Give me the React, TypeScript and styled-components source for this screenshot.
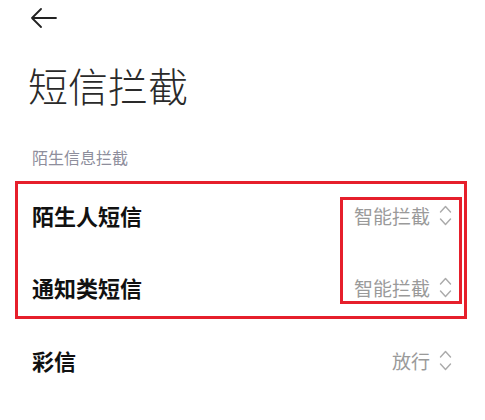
import styled, { createGlobalStyle } from "styled-components";

const GlobalStyle = createGlobalStyle`
  body {
    margin: 0;
    background: #ffffff;
    font-family: "Noto Sans CJK SC", "Noto Sans", sans-serif;
  }
`;

interface Item {
  label: string;
  value: string;
}

const strangerItems: Item[] = [
  { label: "陌生人短信", value: "智能拦截" },
  { label: "通知类短信", value: "智能拦截" },
];

const BackIcon = () => (
  <svg width="28" height="20" viewBox="0 0 28 20" fill="none">
    <path
      d="M2 10 H26 M11 1 L2 10 L11 19"
      stroke="#222"
      strokeWidth="1.8"
      strokeLinecap="round"
      strokeLinejoin="round"
    />
  </svg>
);

const UpDownIcon = () => (
  <svg width="13" height="21" viewBox="0 0 13 21" fill="none">
    <path
      d="M1.5 7 L6.5 1.5 L11.5 7 M1.5 14 L6.5 19.5 L11.5 14"
      stroke="#aaaaaa"
      strokeWidth="1.4"
      strokeLinecap="round"
      strokeLinejoin="round"
    />
  </svg>
);

function SettingRow({ label, value, height }) {
  return (
    <Row height={height}>
      <Label>{label}</Label>
      <Value>
        {value}
        <UpDownIcon />
      </Value>
    </Row>
  );
}

export default function App() {
  return (
    <Page>
      <GlobalStyle />
      <Header>
        <BackIcon />
      </Header>
      <Title>短信拦截</Title>
      <SectionTitle>陌生信息拦截</SectionTitle>

      <Highlight>
        <ValueMark />
        {strangerItems.map((item) => (
          <SettingRow
            key={item.label}
            label={item.label}
            value={item.value}
            height={54}
          />
        ))}
      </Highlight>

      <PlainRows>
        <SettingRow label="彩信" value="放行" height={72} />
      </PlainRows>
    </Page>
  );
}

const Page = styled.div`
  width: 485px;
  height: 420px;
  overflow: hidden;
  display: flex;
  flex-direction: column;
`;

const Header = styled.div`
  height: 36px;
  padding-left: 30px;
  display: flex;
  align-items: center;
`;

const Title = styled.h1`
  margin: 25px 0 0;
  padding-left: 28px;
  font-size: 40px;
  line-height: 48px;
  font-weight: 300;
  color: #2a2a2a;
`;

const SectionTitle = styled.div`
  margin-top: 38px;
  padding-left: 32px;
  font-size: 16px;
  line-height: 20px;
  color: #8e8e9c;
`;

const Highlight = styled.div`
  position: relative;
  margin: 14px 18px 0 15px;
  border: 3px solid #e61f2b;
  padding: 4px 12px 2px 14px;
  display: flex;
  flex-direction: column;
  gap: 18px;
`;

const ValueMark = styled.div`
  position: absolute;
  top: 13px;
  bottom: 12px;
  right: 2px;
  width: 116px;
  border: 3px solid #e61f2b;
  pointer-events: none;
`;

const PlainRows = styled.div`
  margin-top: 5px;
  padding: 0 33px 0 32px;
  display: flex;
  flex-direction: column;
`;

const Row = styled.div<{ height: number }>`
  height: ${(props) => props.height}px;
  display: flex;
  align-items: center;
  justify-content: space-between;
`;

const Label = styled.span`
  font-size: 22px;
  font-weight: 700;
  color: #111111;
`;

const Value = styled.span`
  display: flex;
  align-items: center;
  gap: 9px;
  font-size: 19px;
  color: #9a9a9a;
`;
